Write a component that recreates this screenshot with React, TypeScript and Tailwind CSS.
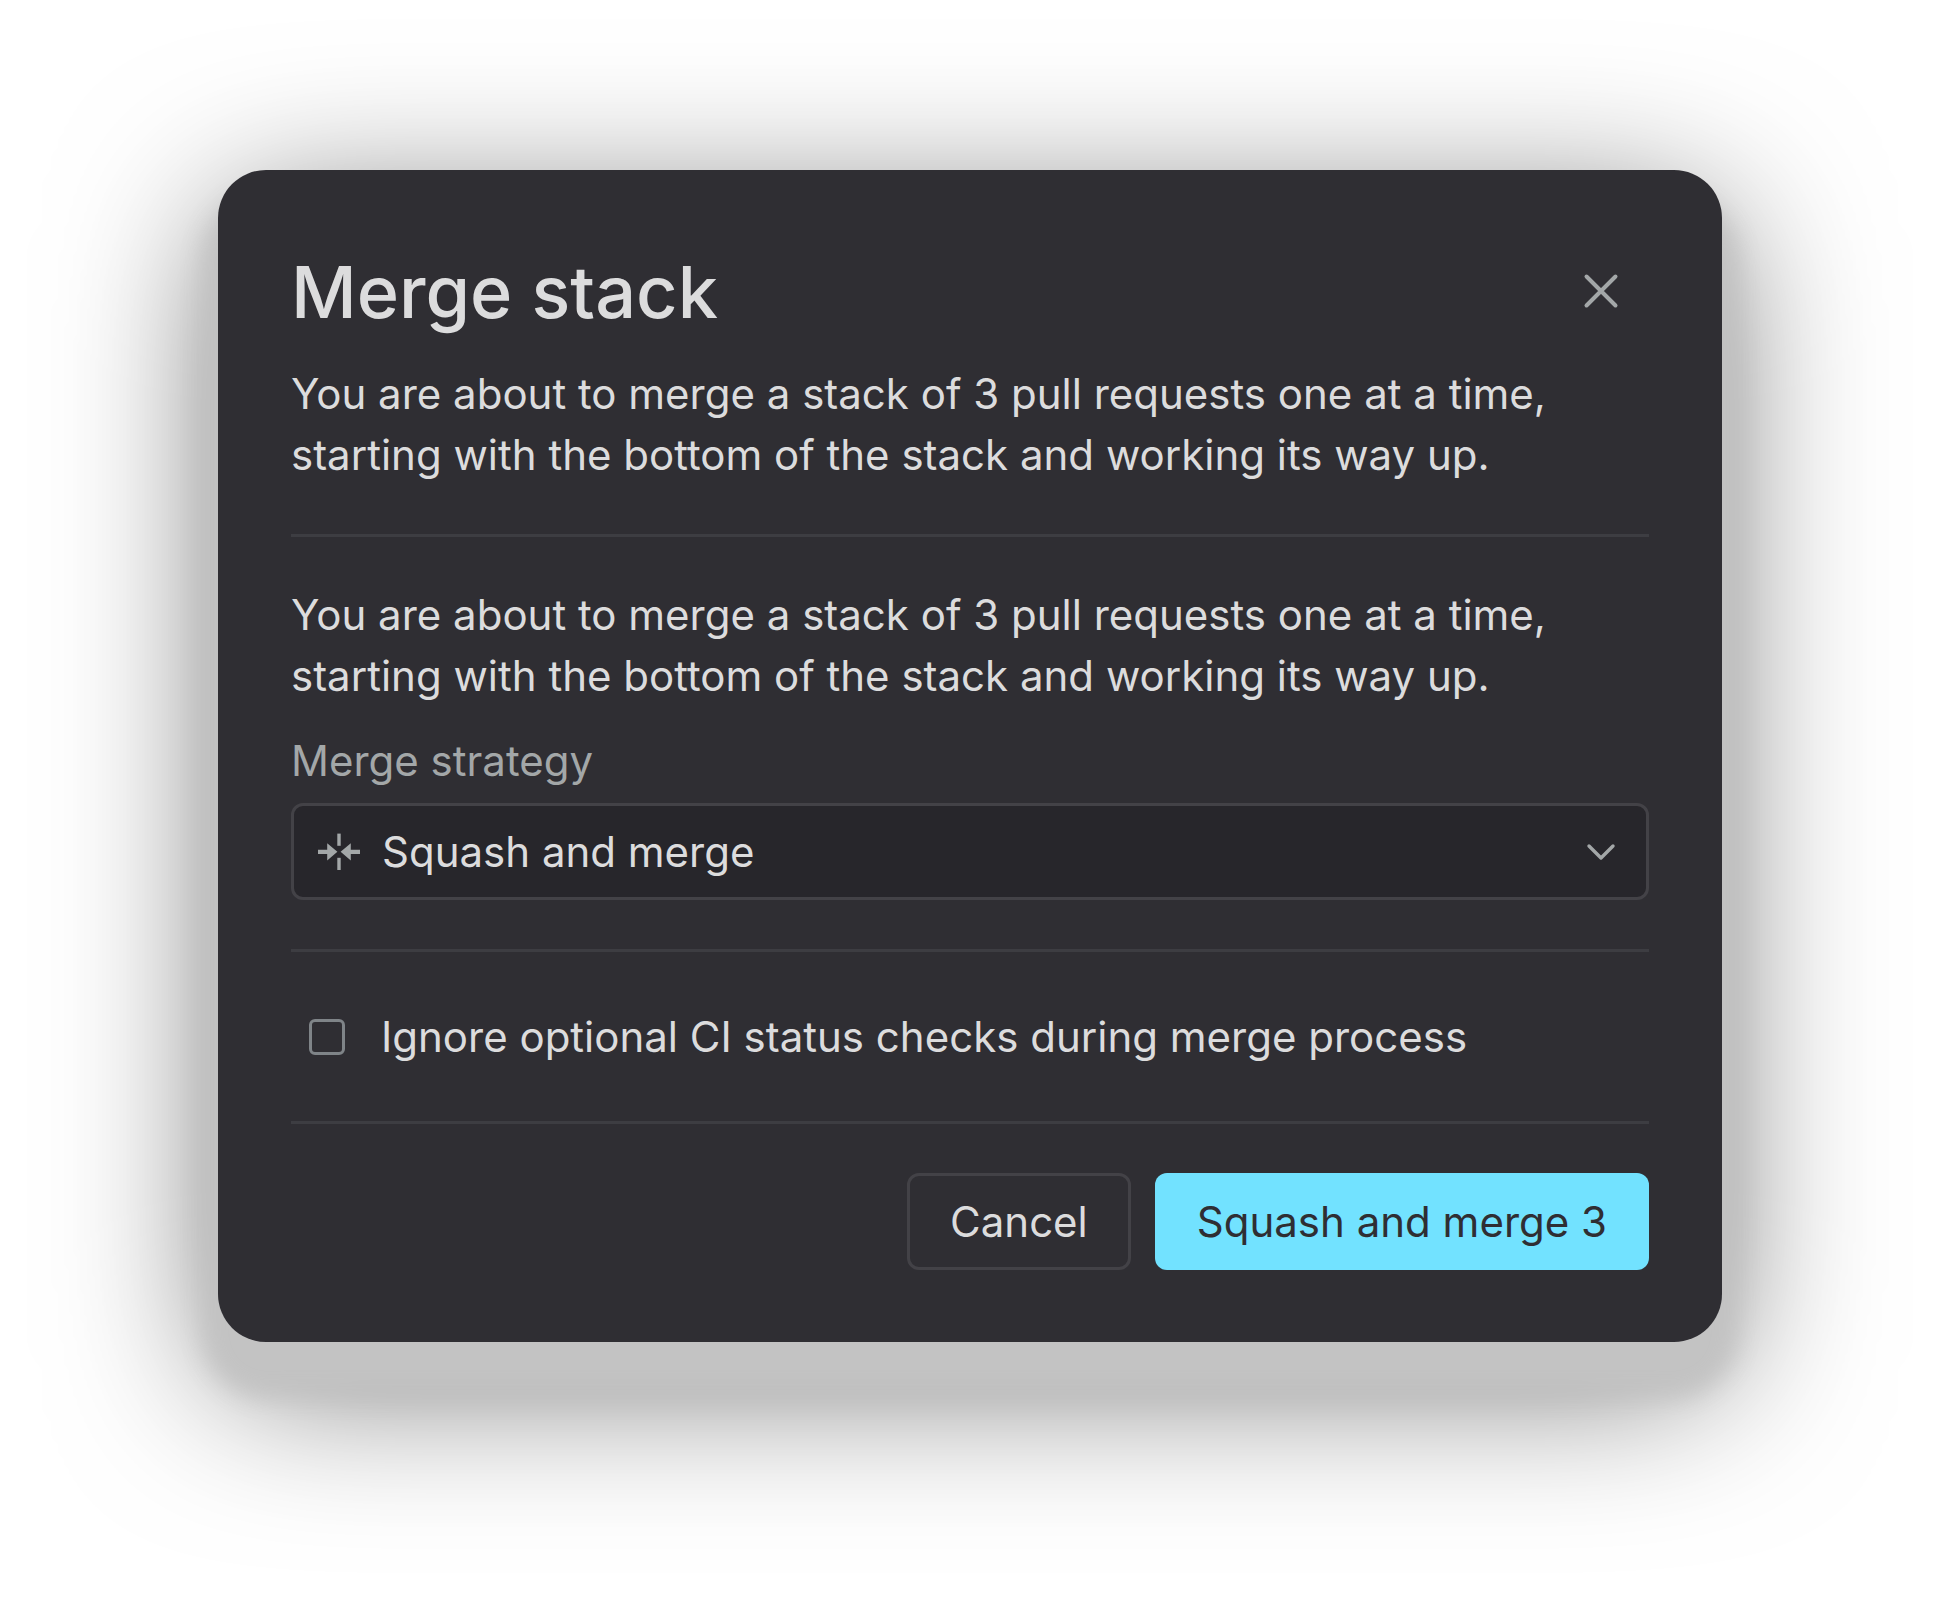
import { useState } from 'react';

const strategies = [
  { value: 'squash', label: 'Squash and merge' },
  { value: 'merge', label: 'Create a merge commit' },
  { value: 'rebase', label: 'Rebase and merge' },
];

const PULL_REQUEST_COUNT = 3;

const CloseIcon = () => (
  <svg className="w-12 h-12" viewBox="0 0 48 48" fill="none" stroke="currentColor" strokeWidth="4" strokeLinecap="round" aria-hidden="true">
    <path d="M9.5 8.5l29 29M38.5 8.5l-29 29" />
  </svg>
);

const ChevronIcon = () => (
  <svg className="w-12 h-12" viewBox="0 0 48 48" fill="none" stroke="currentColor" strokeWidth="3.4" strokeLinecap="round" strokeLinejoin="round" aria-hidden="true">
    <path d="M12 18l12 12 12-12" />
  </svg>
);

const SquashIcon = () => (
  <svg className="w-12 h-12" viewBox="0 0 48 48" fill="currentColor" aria-hidden="true">
    <rect x="22.3" y="5.6" width="3.4" height="12.2" />
    <rect x="22.3" y="29.8" width="3.4" height="12.2" />
    <path d="M3 21.8h9.2v-6.6L22.4 23.8l-10.2 8.8v-6.6H3z" />
    <path d="M45 21.8h-9.2v-6.6L25.6 23.8l10.2 8.8v-6.6H45z" />
  </svg>
);

const Divider = () => <hr className="border-0 h-[3px] bg-[#3d3d42]" />;

const Description = () => (
  <p className="pt-[47px] pb-[49px]">
    You are about to merge a stack of 3 pull requests one at a time, starting with the bottom of the stack and
    working its way up.
  </p>
);

export default function App() {
  const [strategy, setStrategy] = useState('squash');
  const [ignoreChecks, setIgnoreChecks] = useState(false);

  return (
    <main className="min-h-screen bg-white px-[218px] pt-[170px] pb-24 font-['Inter',sans-serif] text-[42px] leading-[61px] text-[#dcdcdd]">
      <section
        role="dialog"
        aria-labelledby="merge-title"
        className="rounded-[48px] bg-[#2f2e33] p-[73px] pb-[72px] shadow-[0_40px_24px_14px_#c3c3c3,0_40px_160px_0_rgba(0,0,0,0.57)]"
      >
        <header className="flex items-center justify-between pr-6">
          <h1 id="merge-title" className="text-[72px] leading-[97px] font-medium">Merge stack</h1>
          <button type="button" aria-label="Close" className="text-[#a3a7a8]">
            <CloseIcon />
          </button>
        </header>

        <div className="-mt-6">
          <Description />
        </div>
        <Divider />

        <div className="-mb-[25px]">
          <Description />
        </div>
        <label htmlFor="strategy" className="block mb-3 text-[#a3a7a8]">Merge strategy</label>
        <div className="relative mb-[49px]">
          <select
            id="strategy"
            value={strategy}
            onChange={(e) => setStrategy(e.target.value)}
            className="block w-full h-[97px] appearance-none rounded-xl border-3 border-[#434247] bg-[#27262b] pl-[88px] pr-24"
          >
            {strategies.map(({ value, label }) => (
              <option key={value} value={value}>{label}</option>
            ))}
          </select>
          <span className="pointer-events-none absolute inset-y-0 left-6 flex items-center text-[#a3a7a8]">
            <SquashIcon />
          </span>
          <span className="pointer-events-none absolute inset-y-0 right-6 flex items-center text-[#a3a7a8]">
            <ChevronIcon />
          </span>
        </div>
        <Divider />

        <label className="flex items-center gap-9 py-[54px] pl-[18px]">
          <input
            type="checkbox"
            checked={ignoreChecks}
            onChange={(e) => setIgnoreChecks(e.target.checked)}
            className="w-9 h-9 shrink-0 appearance-none rounded-md border-3 border-[#7f8488] checked:bg-[#72e2ff]"
          />
          Ignore optional CI status checks during merge process
        </label>
        <Divider />

        <footer className="flex justify-end gap-6 mt-[49px]">
          <button type="button" className="h-[97px] rounded-xl border-3 border-[#434247] px-10">Cancel</button>
          <button type="button" className="h-[97px] rounded-xl bg-[#72e2ff] px-[42px] text-[#2f2e33]">
            {`Squash and merge ${PULL_REQUEST_COUNT}`}
          </button>
        </footer>
      </section>
    </main>
  );
}
